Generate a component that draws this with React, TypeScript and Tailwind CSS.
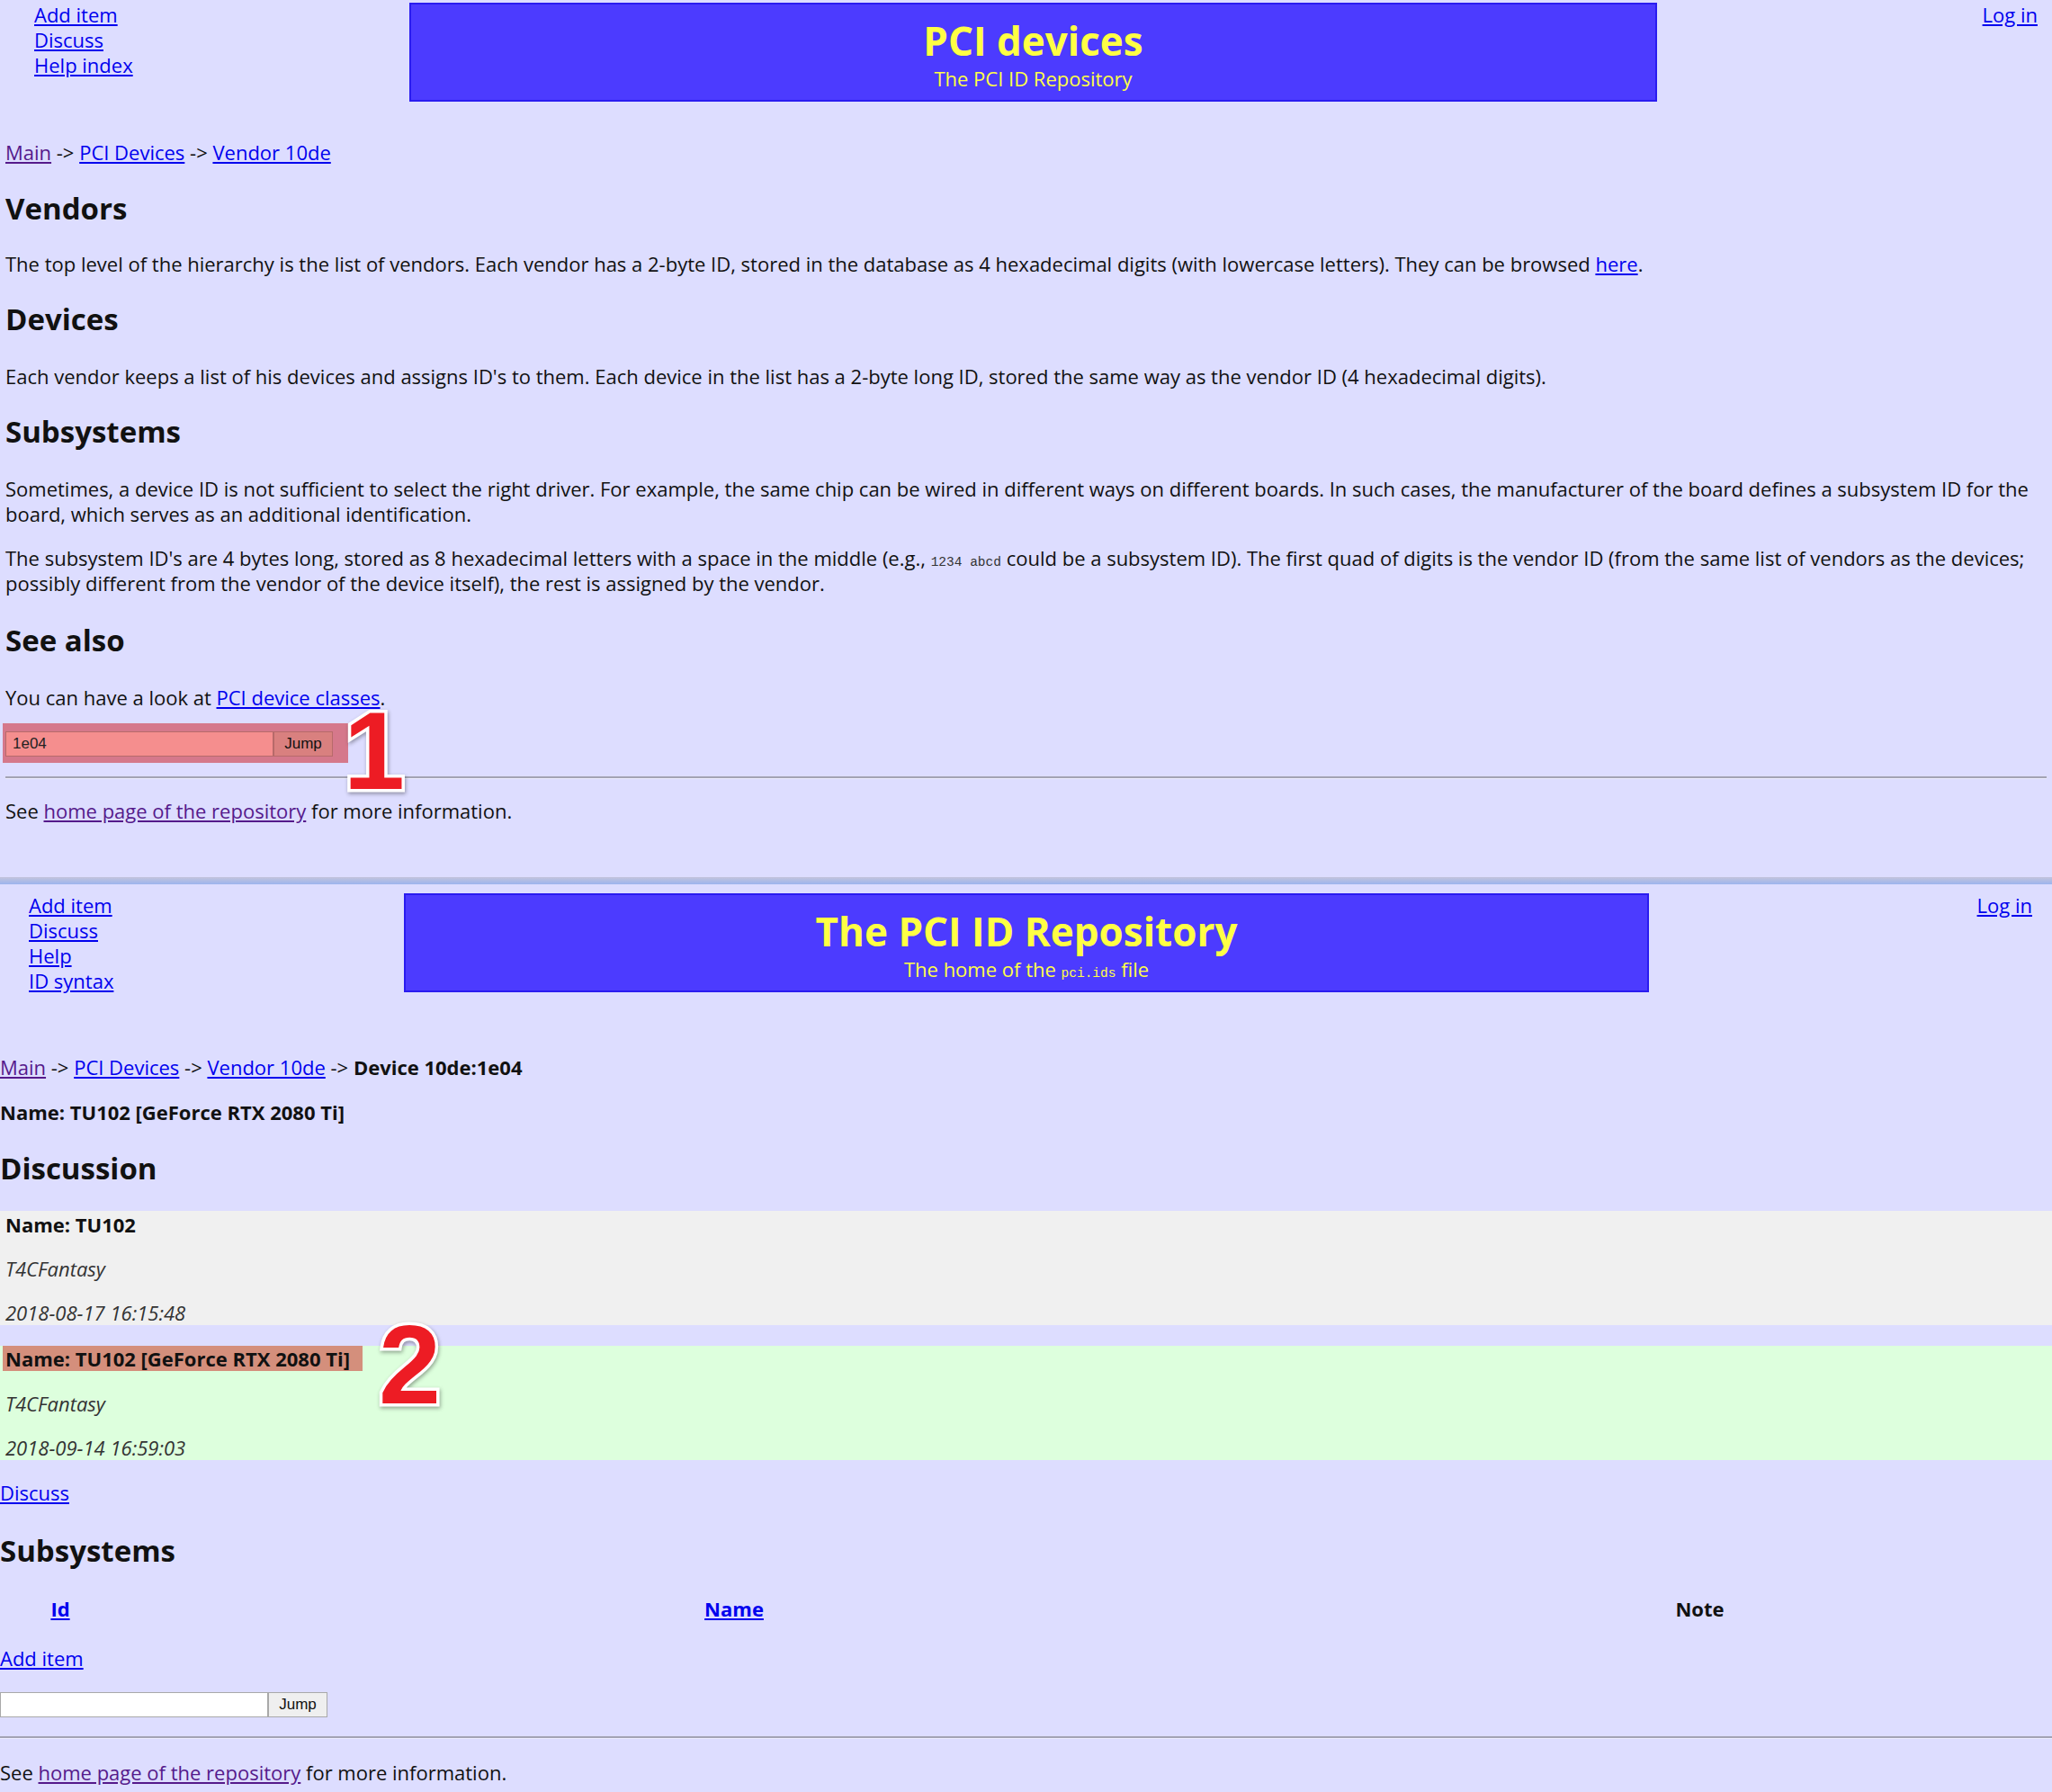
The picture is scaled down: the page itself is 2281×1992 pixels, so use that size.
import React from 'react';

const linkCls = 'text-[#0000ee] underline';
const visitedCls = 'text-[#551a8b] underline';

function TitleBox({ title, subtitle, className }: { title: string; subtitle: React.ReactNode; className: string }) {
  return (
    <div className={`h-[110px] shrink-0 border-2 border-[#2a1cf0] bg-[#4c3bff] text-center text-[#ffff44] pt-[16px] ${className}`}>
      <div className="text-[44px] font-bold leading-[48px]">{title}</div>
      <div className="mt-[4px] text-[22px] leading-[28px]">{subtitle}</div>
    </div>
  );
}

function JumpForm({ tinted }: { tinted?: boolean }) {
  return (
    <div className="flex font-['Liberation_Sans',sans-serif] text-[17px]">
      <div
        className={`h-[28px] w-[298px] border pl-[7px] leading-[26px] ${
          tinted ? 'border-[#b76a6a] bg-[#f58e8e] text-[#222]' : 'border-[#a9a9a9] bg-white'
        }`}
      >
        {tinted ? '1e04' : ''}
      </div>
      <button
        className={`h-[28px] w-[66px] border leading-[26px] text-[#111] ${
          tinted ? 'border-[#b76a6a] bg-[#d9807f]' : 'border-[#a9a9a9] bg-[#efefef]'
        }`}
      >
        Jump
      </button>
    </div>
  );
}

function Rule() {
  return <div className="h-0 border-t-2 border-b border-t-[#a3a3b3] border-b-[#ececff]" />;
}

const h2Cls = 'text-[33px] font-bold leading-[40px]';
const codeCls = "font-['Liberation_Mono',monospace] text-[14.5px] leading-none";

export default function App() {
  return (
    <div className="relative min-h-[1992px] w-full overflow-hidden bg-[#ddddff] font-['Open_Sans',sans-serif] text-[22px] leading-[28px] text-[#111]">
      {/* first page: help */}
      <div className="h-[975px] px-[6px]">
        <div className="flex items-start">
          <div className="w-[449px] shrink-0 pl-[32px] pt-[2px]">
            <div><a className={linkCls}>Add item</a></div>
            <div><a className={linkCls}>Discuss</a></div>
            <div><a className={linkCls}>Help index</a></div>
          </div>
          <TitleBox className="mt-[3px] w-[1387px]" title="PCI devices" subtitle="The PCI ID Repository" />
          <div className="flex-1 pr-[10px] pt-[2px] text-right">
            <a className={linkCls}>Log in</a>
          </div>
        </div>

        <p className="mt-[42px]">
          <a className={visitedCls}>Main</a> -&gt; <a className={linkCls}>PCI Devices</a> -&gt;{' '}
          <a className={linkCls}>Vendor 10de</a>
        </p>

        <h2 className={`mt-[29px] ${h2Cls}`}>Vendors</h2>
        <p className="mt-[27px]">
          The top level of the hierarchy is the list of vendors. Each vendor has a 2-byte ID, stored in the database as 4
          hexadecimal digits (with lowercase letters). They can be browsed <a className={linkCls}>here</a>.
        </p>

        <h2 className={`mt-[28px] ${h2Cls}`}>Devices</h2>
        <p className="mt-[29px]">
          Each vendor keeps a list of his devices and assigns ID's to them. Each device in the list has a 2-byte long ID,
          stored the same way as the vendor ID (4 hexadecimal digits).
        </p>

        <h2 className={`mt-[28px] ${h2Cls}`}>Subsystems</h2>
        <p className="mt-[29px]">
          Sometimes, a device ID is not sufficient to select the right driver. For example, the same chip can be wired in
          different ways on different boards. In such cases, the manufacturer of the board defines a subsystem ID for the
          board, which serves as an additional identification.
        </p>
        <p className="mt-[21px]">
          The subsystem ID's are 4 bytes long, stored as 8 hexadecimal letters with a space in the middle (e.g.,{' '}
          <code className={`${codeCls} text-[#333]`}>1234 abcd</code> could be a subsystem ID). The first quad of digits
          is the vendor ID (from the same list of vendors as the devices; possibly different from the vendor of the
          device itself), the rest is assigned by the vendor.
        </p>

        <h2 className={`mt-[30px] ${h2Cls}`}>See also</h2>
        <p className="mt-[29px]">
          You can have a look at <a className={linkCls}>PCI device classes</a>.
        </p>

        <div className="ml-[-3px] mt-[15px] w-[384px] bg-[#d5788b] pb-[7px] pl-[3px] pt-[9px]">
          <JumpForm tinted />
        </div>

        <div className="mt-[15px]">
          <Rule />
        </div>
        <p className="mt-[21px]">
          See <a className={visitedCls}>home page of the repository</a> for more information.
        </p>
      </div>

      {/* divider between the two screenshots */}
      <div className="h-[8px] bg-gradient-to-b from-[#c3c3dc] to-[#9cb4ee]" />

      {/* second page: device */}
      <div className="h-[1009px]">
        <div className="flex items-start">
          <div className="w-[449px] shrink-0 pl-[32px] pt-[9px]">
            <div><a className={linkCls}>Add item</a></div>
            <div><a className={linkCls}>Discuss</a></div>
            <div><a className={linkCls}>Help</a></div>
            <div><a className={linkCls}>ID syntax</a></div>
          </div>
          <TitleBox
            className="mt-[10px] w-[1384px]"
            title="The PCI ID Repository"
            subtitle={
              <>
                The home of the <code className={codeCls}>pci.ids</code> file
              </>
            }
          />
          <div className="flex-1 pr-[22px] pt-[9px] text-right">
            <a className={linkCls}>Log in</a>
          </div>
        </div>

        <p className="mt-[68px]">
          <a className={visitedCls}>Main</a> -&gt; <a className={linkCls}>PCI Devices</a> -&gt;{' '}
          <a className={linkCls}>Vendor 10de</a> -&gt; <b>Device 10de:1e04</b>
        </p>
        <p className="mt-[22px] font-bold">Name: TU102 [GeForce RTX 2080 Ti]</p>

        <h2 className={`mt-[29px] ${h2Cls}`}>Discussion</h2>

        <div className="mt-[27px] bg-[#f0f0f0] pl-[6px] pt-[1px]">
          <p className="font-bold">Name: TU102</p>
          <p className="mt-[21px] italic text-[#333]">T4CFantasy</p>
          <p className="mt-[21px] italic text-[#333]">2018-08-17 16:15:48</p>
        </div>

        <div className="mt-[23px] bg-[#ddffdd] pl-[6px]">
          <p>
            <span className="ml-[-3px] inline-block bg-[#d48f7c] pl-[3px] pr-[14px] font-bold">
              Name: TU102 [GeForce RTX 2080 Ti]
            </span>
          </p>
          <p className="mt-[22px] italic text-[#333]">T4CFantasy</p>
          <p className="mt-[21px] italic text-[#333]">2018-09-14 16:59:03</p>
        </div>

        <p className="mt-[22px]">
          <a className={linkCls}>Discuss</a>
        </p>

        <h2 className={`mt-[31px] ${h2Cls}`}>Subsystems</h2>

        <div className="mt-[30px] grid grid-cols-[134px_1364px_1fr] text-center font-bold">
          <div><a className={linkCls}>Id</a></div>
          <div><a className={linkCls}>Name</a></div>
          <div>Note</div>
        </div>

        <p className="mt-[27px]">
          <a className={linkCls}>Add item</a>
        </p>

        <div className="mt-[24px]">
          <JumpForm />
        </div>

        <div className="mt-[21px]">
          <Rule />
        </div>
        <p className="mt-[23px]">
          See <a className={visitedCls}>home page of the repository</a> for more information.
        </p>
      </div>

      {/* annotation numerals */}
      <div className="absolute left-[382px] top-[774px] font-['Liberation_Sans',sans-serif] text-[122px] font-bold leading-none text-[#ed1c24] [-webkit-text-stroke:7px_white] [paint-order:stroke_fill] [filter:drop-shadow(1px_2px_2px_rgba(0,0,0,0.35))]">
        1
      </div>
      <div className="absolute left-[421px] top-[1455px] font-['Liberation_Sans',sans-serif] text-[124px] font-bold leading-none text-[#ed1c24] [-webkit-text-stroke:7px_white] [paint-order:stroke_fill] [filter:drop-shadow(1px_2px_2px_rgba(0,0,0,0.35))]">
        2
      </div>
    </div>
  );
}
